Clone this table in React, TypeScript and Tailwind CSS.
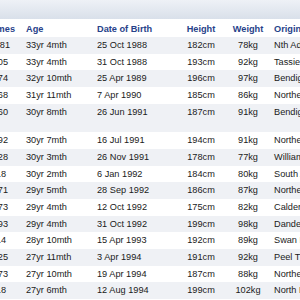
const rows = [
  { games: '181', pad: 'pr-[14px]', age: '33yr 4mth', dob: '25 Oct 1988', height: '182cm', weight: '78kg', origin: 'Nth Adelaide', draft: 'Pick 5' },
  { games: '205', pad: 'pr-[16px]', age: '33yr 4mth', dob: '31 Oct 1988', height: '193cm', weight: '92kg', origin: 'Tassie Mariners', draft: 'Pick 11' },
  { games: '174', pad: 'pr-[16px]', age: '32yr 10mth', dob: '25 Apr 1989', height: '196cm', weight: '97kg', origin: 'Bendigo Pioneers', draft: 'Pick 20' },
  { games: '168', pad: 'pr-[16px]', age: '31yr 11mth', dob: '7 Apr 1990', height: '185cm', weight: '86kg', origin: 'Northern Knights', draft: 'Pick 8' },
  { games: '160', pad: 'pr-[16px]', age: '30yr 8mth', dob: '26 Jun 1991', height: '187cm', weight: '91kg', origin: 'Bendigo Pioneers', draft: 'Rookie elevated' },
  { games: '192', pad: 'pr-[16px]', age: '30yr 7mth', dob: '16 Jul 1991', height: '194cm', weight: '91kg', origin: 'Northern Knights', draft: 'Pick 2' },
  { games: '128', pad: 'pr-[16px]', age: '30yr 3mth', dob: '26 Nov 1991', height: '178cm', weight: '77kg', origin: 'Williamstown', draft: 'Pick 34' },
  { games: '118', pad: 'pr-[18px]', age: '30yr 2mth', dob: '6 Jan 1992', height: '184cm', weight: '80kg', origin: 'South Adelaide', draft: 'Pick 41' },
  { games: '171', pad: 'pr-[16px]', age: '29yr 5mth', dob: '28 Sep 1992', height: '186cm', weight: '87kg', origin: 'Northern Knights', draft: 'Pick 16' },
  { games: '173', pad: 'pr-[16px]', age: '29yr 4mth', dob: '12 Oct 1992', height: '175cm', weight: '82kg', origin: 'Calder Cannons', draft: 'Pick 25' },
  { games: '193', pad: 'pr-[16px]', age: '29yr 4mth', dob: '31 Oct 1992', height: '199cm', weight: '98kg', origin: 'Dandenong Stingrays', draft: 'Pick 3' },
  { games: '114', pad: 'pr-[18px]', age: '28yr 10mth', dob: '15 Apr 1993', height: '192cm', weight: '89kg', origin: 'Swan Districts', draft: 'Pick 30' },
  { games: '125', pad: 'pr-[16px]', age: '27yr 11mth', dob: '3 Apr 1994', height: '191cm', weight: '92kg', origin: 'Peel Thunder', draft: 'Pick 12' },
  { games: '173', pad: 'pr-[16px]', age: '27yr 10mth', dob: '19 Apr 1994', height: '187cm', weight: '88kg', origin: 'Northern Knights', draft: 'Pick 7' },
  { games: '118', pad: 'pr-[18px]', age: '27yr 6mth', dob: '12 Aug 1994', height: '199cm', weight: '102kg', origin: 'North Ballarat', draft: 'Pick 19' },
];

const th = 'pt-[4px] pb-[2px] font-bold text-[#27428a] whitespace-nowrap';
const td = 'pt-[2px] pb-[2.67px] align-top whitespace-nowrap';

export default function App() {
  return (
    <div
      className="w-[300px] h-[300px] overflow-hidden bg-white text-[9.2px] leading-[12px] text-[#1a1a1a]"
      style={{ fontFamily: '"Liberation Sans", Arial, sans-serif' }}
    >
      <div className="h-[19px] bg-gradient-to-b from-[#eef1f6] to-[#d9e0ea]" />
      <table className="ml-[-30px] table-fixed border-collapse w-[492px]">
        <colgroup>
          <col className="w-[54px]" />
          <col className="w-[71px]" />
          <col className="w-[83px]" />
          <col className="w-[46px]" />
          <col className="w-[48px]" />
          <col className="w-[140px]" />
          <col className="w-[50px]" />
        </colgroup>
        <thead>
          <tr className="bg-white">
            <th className={`${th} text-right pr-[9px]`}>Games</th>
            <th className={`${th} text-left pl-[2px]`}>Age</th>
            <th className={`${th} text-left pl-[2px]`}>Date of Birth</th>
            <th className={`${th} text-center`}>Height</th>
            <th className={`${th} text-center`}>Weight</th>
            <th className={`${th} text-left pl-[2px]`}>Origin</th>
            <th className={`${th} text-left pl-[2px]`}>Draft</th>
          </tr>
        </thead>
        <tbody>
          {rows.map((r, i) => (
            <tr key={i} className={i % 2 === 0 ? 'bg-[#eff1f5]' : 'bg-white'}>
              <td className={`${td} text-right ${r.pad}`}>{r.games}</td>
              <td className={`${td} pl-[2px]`}>{r.age}</td>
              <td className={`${td} pl-[2px]`}>{r.dob}</td>
              <td className={`${td} text-center`}>{r.height}</td>
              <td className={`${td} text-center`}>{r.weight}</td>
              <td className={`${td} pl-[2px]`}>{r.origin}</td>
              <td className="pt-[2px] pb-[2.67px] align-top pl-[2px] whitespace-normal">{r.draft}</td>
            </tr>
          ))}
        </tbody>
      </table>
    </div>
  );
}
